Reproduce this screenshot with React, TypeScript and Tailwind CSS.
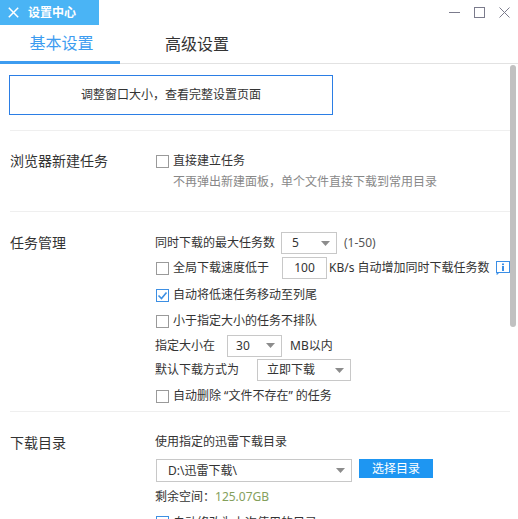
import React from 'react';

const Checkbox = ({ checked = false }: { checked?: boolean }) => (
  <span
    className={`w-[13px] h-[13px] shrink-0 border flex items-center justify-center bg-white ${
      checked ? 'border-[#3d8fe3]' : 'border-[#9a9a9a]'
    }`}
  >
    {checked && (
      <svg width="11" height="11" viewBox="0 0 11 11">
        <polyline points="1.5,5.5 4.5,8.5 9.5,2.5" fill="none" stroke="#3d8fe3" strokeWidth="1.6" />
      </svg>
    )}
  </span>
);

const Arrow = () => (
  <svg width="9" height="5" viewBox="0 0 9 5" className="shrink-0">
    <polygon points="0,0 9,0 4.5,5" fill="#8c8c8c" />
  </svg>
);

const Select = ({ value, className }: { value: string; className: string }) => (
  <div className={`border border-[#c8c8c8] bg-white flex items-center justify-between pr-[6px] ${className}`}>
    <span>{value}</span>
    <Arrow />
  </div>
);

const CheckRow = ({ label, checked, h }: { label: string; checked?: boolean; h: string }) => (
  <div className={`flex items-center gap-[4px] pl-[1px] ${h}`}>
    <Checkbox checked={checked} />
    <span>{label}</span>
  </div>
);

const InfoIcon = () => (
  <svg width="14" height="14" viewBox="0 0 14 14" className="shrink-0">
    <rect x="0.5" y="0.5" width="13" height="11" fill="none" stroke="#3a8ee6" />
    <path d="M1 12 L1 13.5 L2.5 12" fill="#3a8ee6" stroke="#3a8ee6" strokeWidth="0.8" />
    <rect x="6" y="2.5" width="2" height="1.6" fill="#3a8ee6" />
    <rect x="6" y="5" width="2" height="5" fill="#3a8ee6" />
  </svg>
);

export default function App() {
  return (
    <div className="w-[518px] h-[519px] overflow-hidden relative bg-white text-[#333] text-[12px] leading-[16px] font-['Noto_Sans','Noto_Sans_CJK_SC',sans-serif]">
      {/* title bar */}
      <div className="flex h-[25px]">
        <div className="w-[99px] bg-[#4ab4f5] flex items-center pl-[8px] gap-[9px] text-white font-bold">
          <svg width="11" height="11" viewBox="0 0 11 11">
            <path d="M0.8 0.8 L10.2 10.2 M10.2 0.8 L0.8 10.2" stroke="#fff" strokeWidth="1.5" />
          </svg>
          <span>设置中心</span>
        </div>
        <div className="ml-auto flex items-center gap-[14px] pr-[8px]">
          <svg width="11" height="11" viewBox="0 0 11 11">
            <line x1="0" y1="5.5" x2="11" y2="5.5" stroke="#7b7b8c" strokeWidth="1" />
          </svg>
          <svg width="11" height="11" viewBox="0 0 11 11">
            <rect x="0.5" y="0.5" width="10" height="10" fill="none" stroke="#7b7b8c" strokeWidth="1" />
          </svg>
          <svg width="11" height="11" viewBox="0 0 11 11">
            <path d="M0.5 0.5 L10.5 10.5 M10.5 0.5 L0.5 10.5" stroke="#7b7b8c" strokeWidth="1" />
          </svg>
        </div>
      </div>

      {/* tabs */}
      <div className="flex h-[39px] border-b border-[#e2e2e2] text-[16px] leading-[20px]">
        <div className="w-[120px] -mb-px border-b-[3px] border-[#3d9cf0] flex items-center justify-center pl-[3px] text-[#3d9cf0]">
          基本设置
        </div>
        <div className="ml-[45px] flex items-center text-[#333]">高级设置</div>
      </div>

      {/* notice box */}
      <div className="mt-[11px] ml-[9px] w-[324px] h-[40px] border border-[#2b7ee5] flex items-center justify-center">
        调整窗口大小，查看完整设置页面
      </div>

      <div className="mt-[15px] ml-[10px] w-[500px]">
        {/* 浏览器新建任务 */}
        <div className="flex border-t border-[#efefef] pt-[19px] pb-[19px]">
          <div className="w-[145px] h-[22px] flex items-center text-[14px]">浏览器新建任务</div>
          <div className="flex flex-col">
            <CheckRow label="直接建立任务" h="h-[22px]" />
            <div className="h-[20px] flex items-center pl-[18px] text-[#888]">
              不再弹出新建面板，单个文件直接下载到常用目录
            </div>
          </div>
        </div>

        {/* 任务管理 */}
        <div className="flex border-t border-[#efefef] pt-[19px] pb-[1px]">
          <div className="w-[145px] h-[24px] flex items-center text-[14px]">任务管理</div>
          <div className="flex flex-col">
            <div className="h-[24px] flex items-center">
              <span>同时下载的最大任务数</span>
              <Select value="5" className="ml-[6px] w-[56px] h-[22px] pl-[10px]" />
              <span className="ml-[7px] text-[#555]">(1-50)</span>
            </div>
            <div className="h-[26px] flex items-center pl-[1px]">
              <Checkbox />
              <span className="ml-[4px]">全局下载速度低于</span>
              <div className="ml-[13px] w-[45px] h-[22px] border border-[#c8c8c8] flex items-center justify-center">
                100
              </div>
              <span className="ml-[2px]">KB/s 自动增加同时下载任务数</span>
              <span className="ml-[6px] flex items-center">
                <InfoIcon />
              </span>
            </div>
            <CheckRow label="自动将低速任务移动至列尾" checked h="h-[28px]" />
            <CheckRow label="小于指定大小的任务不排队" h="h-[24px]" />
            <div className="h-[25px] flex items-center">
              <span>指定大小在</span>
              <Select value="30" className="ml-[12px] w-[55px] h-[22px] pl-[8px]" />
              <span className="ml-[8px]">MB以内</span>
            </div>
            <div className="h-[24px] flex items-center">
              <span>默认下载方式为</span>
              <Select value="立即下载" className="ml-[18px] w-[94px] h-[22px] pl-[9px]" />
            </div>
            <CheckRow label="自动删除 “文件不存在” 的任务" h="h-[28px]" />
          </div>
        </div>

        {/* 下载目录 */}
        <div className="flex border-t border-[#efefef] pt-[19px]">
          <div className="w-[145px] h-[24px] flex items-center text-[14px]">下载目录</div>
          <div className="flex flex-col">
            <div className="h-[22px] flex items-center">使用指定的迅雷下载目录</div>
            <div className="mt-[6px] flex items-start">
              <Select value="D:\迅雷下载\" className="ml-[1px] w-[196px] h-[23px] pl-[11px]" />
              <button className="ml-[7px] w-[74px] h-[19px] bg-[#1e96f2] text-white flex items-center justify-center">
                选择目录
              </button>
            </div>
            <div className="mt-[3px] h-[24px] flex items-center">
              <span>剩余空间：</span>
              <span className="text-[#84a05c]">125.07GB</span>
            </div>
            <CheckRow label="自动修改为上次使用的目录" checked h="h-[27px]" />
          </div>
        </div>
      </div>

      {/* scrollbar */}
      <div className="absolute left-[510px] top-[65px] w-[6px] h-[262px] rounded-full bg-[#c1c1c1]" />
    </div>
  );
}
